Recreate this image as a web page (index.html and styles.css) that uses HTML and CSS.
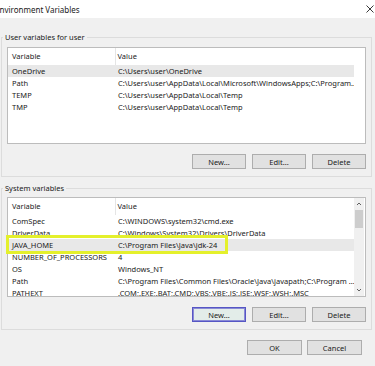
FILE: index.html
```html
<!DOCTYPE html>
<html>
<head>
    <title>Environment Variables</title>
    <meta name="viewport" content="width=device-width, initial-scale=1.0">
    <link rel="stylesheet" href="styles.css">
</head>
<body>
    <div class="window">
        <div class="titlebar">
            <span class="title">Environment Variables</span>
            <svg class="close" width="8" height="8" viewBox="0 0 8 8">
                <path d="M0.5 0.5 L7.5 7.5 M7.5 0.5 L0.5 7.5" stroke="#222" stroke-width="0.9" fill="none"/>
            </svg>
        </div>

        <div class="content">
            <fieldset class="group">
                <legend>User variables for user</legend>
                <div class="listbox listbox-user">
                    <div class="table-wrap">
                        <table class="vars">
                            <colgroup><col class="col-name"><col class="col-value"></colgroup>
                            <thead>
                                <tr><th>Variable</th><th>Value</th></tr>
                            </thead>
                            <tbody>
                                <tr class="selected"><td>OneDrive</td><td>C:\Users\user\OneDrive</td></tr>
                                <tr><td>Path</td><td>C:\Users\user\AppData\Local\Microsoft\WindowsApps;C:\Program...</td></tr>
                                <tr><td>TEMP</td><td>C:\Users\user\AppData\Local\Temp</td></tr>
                                <tr><td>TMP</td><td>C:\Users\user\AppData\Local\Temp</td></tr>
                            </tbody>
                        </table>
                    </div>
                </div>
                <div class="buttons">
                    <button class="btn">New...</button>
                    <button class="btn">Edit...</button>
                    <button class="btn">Delete</button>
                </div>
            </fieldset>

            <fieldset class="group group-system">
                <legend>System variables</legend>
                <div class="listbox listbox-system">
                    <div class="table-wrap">
                        <table class="vars">
                            <colgroup><col class="col-name"><col class="col-value"></colgroup>
                            <thead>
                                <tr><th>Variable</th><th>Value</th></tr>
                            </thead>
                            <tbody>
                                <tr><td>ComSpec</td><td>C:\WINDOWS\system32\cmd.exe</td></tr>
                                <tr><td>DriverData</td><td>C:\Windows\System32\Drivers\DriverData</td></tr>
                                <tr class="selected"><td>JAVA_HOME</td><td>C:\Program Files\Java\jdk-24</td></tr>
                                <tr><td>NUMBER_OF_PROCESSORS</td><td>4</td></tr>
                                <tr><td>OS</td><td>Windows_NT</td></tr>
                                <tr><td>Path</td><td>C:\Program Files\Common Files\Oracle\Java\javapath;C:\Program ...</td></tr>
                                <tr><td>PATHEXT</td><td>.COM;.EXE;.BAT;.CMD;.VBS;.VBE;.JS;.JSE;.WSF;.WSH;.MSC</td></tr>
                            </tbody>
                        </table>
                    </div>
                    <div class="scrollbar">
                        <svg class="arrow" width="10" height="12" viewBox="0 0 10 12">
                            <path d="M3 7 L5 5 L7 7" stroke="#606060" stroke-width="1" fill="none"/>
                        </svg>
                        <div class="thumb"></div>
                        <div class="track"></div>
                        <svg class="arrow" width="10" height="12" viewBox="0 0 10 12">
                            <path d="M3 5 L5 7 L7 5" stroke="#606060" stroke-width="1" fill="none"/>
                        </svg>
                    </div>
                    <!-- yellow marker round the JAVA_HOME row -->
                    <div class="marker"></div>
                </div>
                <div class="buttons">
                    <button class="btn btn-focus">New...</button>
                    <button class="btn">Edit...</button>
                    <button class="btn">Delete</button>
                </div>
            </fieldset>

            <div class="dialog-buttons">
                <button class="btn btn-wide">OK</button>
                <button class="btn btn-wide">Cancel</button>
            </div>
        </div>
    </div>
</body>
</html>
```

FILE: styles.css
```css
body {
    margin: 0;
    background: #f0f0f0;
    font-family: 'Segoe UI', 'Noto Sans', sans-serif;
    font-size: 7.5px;
    color: #1a1a1a;
    overflow: hidden;
}
.window {
    width: 375px;
    height: 366px;
}
.titlebar {
    height: 18px;
    background: #fff;
    display: flex;
    align-items: center;
    justify-content: space-between;
    overflow: hidden;
}
.title {
    margin-left: -5px;
    font-size: 8px;
    white-space: nowrap;
}
.close {
    margin-right: 1px;
}
.content {
    padding: 0 3px 0 1px;
}

/* group boxes */
.group {
    margin: 13px 0 0 0;
    padding: 4px 5px 7px 5px;
    border: 1px solid #dcdcdc;
    min-width: 0;
}
.group-system {
    margin-top: 5px;
    padding-top: 3px;
}
.group legend {
    margin-left: -4px;
    padding: 0 2px;
    line-height: 12px;
}

/* list views */
.listbox {
    position: relative;
    display: flex;
    background: #fff;
    border: 1px solid #bcbcbc;
}
.listbox-user {
    height: 95px;
}
.listbox-system {
    height: 98px;
}
.table-wrap {
    width: 346px;
    overflow: hidden;
}
.vars {
    width: 346px;
    table-layout: fixed;
    border-collapse: collapse;
}
.col-name {
    width: 107px;
}
.vars th,
.vars td {
    padding: 0 0 0 4px;
    text-align: left;
    font-weight: normal;
    white-space: nowrap;
    overflow: hidden;
}
.vars th {
    height: 16px;
    line-height: 14px;
    vertical-align: top;
    padding-top: 1px;
}
.vars th + th {
    border-left: 1px solid #e5e5e5;
    padding-left: 2px;
}
.vars td {
    height: 12px;
    line-height: 12px;
}
.vars td + td {
    padding-left: 3px;
}
.vars tr.selected td {
    background: #e8e8e8;
}

/* vertical scrollbar */
.scrollbar {
    width: 10px;
    display: flex;
    flex-direction: column;
    background: #f0f0f0;
}
.arrow {
    display: block;
    flex: none;
}
.thumb {
    height: 18px;
    margin: 0 1px;
    background: #cdcdcd;
}
.track {
    flex: 1;
}
.marker {
    position: absolute;
    left: -2px;
    top: 37px;
    width: 216px;
    height: 13px;
    border: 3px solid #e4f02c;
}

/* buttons */
.buttons,
.dialog-buttons {
    display: flex;
    justify-content: flex-end;
    gap: 6px;
}
.buttons {
    margin-top: 10px;
}
.dialog-buttons {
    margin-top: 10px;
    padding-right: 10px;
    gap: 5px;
}
.btn {
    width: 54px;
    height: 15px;
    padding: 0;
    font-family: inherit;
    font-size: 7.5px;
    color: #1a1a1a;
    background: #e1e1e1;
    border: 1px solid #adadad;
}
.btn-focus {
    background: #e3ede9;
    border-color: #5656c4;
    box-shadow: inset 0 0 0 1px #8a8ad6;
}
.btn-wide {
    width: 55px;
}
```
